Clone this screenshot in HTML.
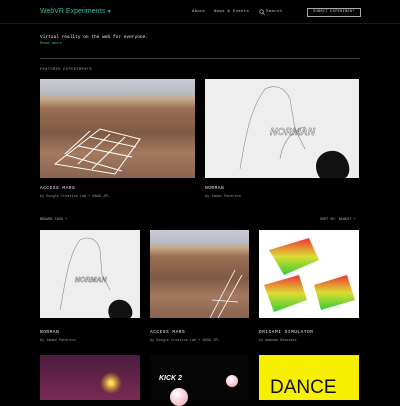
<!DOCTYPE html>
<html><head><meta charset="utf-8"><style>
*{margin:0;padding:0;box-sizing:border-box}
body{width:400px;height:400px;overflow:hidden;background:#000;color:#ddd;font-family:"Liberation Mono",monospace;position:relative}
.a{position:absolute}
.m{font-size:4px;letter-spacing:.3px;color:#ccc}
.t{font-size:4.5px;letter-spacing:.5px;color:#eee}
.s{font-size:3.5px;color:#999}
.mars{background:linear-gradient(180deg,#c9cbd3 0%,#b9bcc6 14%,#c9a98a 20%,#9a6f52 30%,#7e5a44 55%,#a47a5e 75%,#8a6450 100%)}
.norman{background:#eee}
</style></head><body>
<div class="a" style="left:0;top:0;width:400px;height:24px;border-bottom:1px solid #1a1a1a"></div>
<div class="a" style="left:40px;top:8px;font-family:'Liberation Sans',sans-serif;font-size:7px;color:#3bb7a0">WebVR Experiments <span style="font-size:5px">▼</span></div>
<div class="a m" style="left:192px;top:10px;">About</div>
<div class="a m" style="left:214px;top:10px;">News &amp; Events</div>
<svg class="a" style="left:259px;top:9px" width="6" height="6" viewBox="0 0 6 6"><circle cx="2.5" cy="2.5" r="1.8" fill="none" stroke="#ccc" stroke-width=".7"/><path d="M3.8 3.8L5.6 5.6" stroke="#ccc" stroke-width=".7"/></svg>
<div class="a m" style="left:266px;top:10px;">Search</div>
<div class="a m" style="left:307px;top:8px;width:54px;height:9px;border:1px solid #aaa;line-height:7px;text-align:center;font-size:3.6px">SUBMIT EXPERIMENT</div>
<div class="a" style="left:40px;top:35px;font-size:4.5px;color:#eee">Virtual reality on the web for everyone.</div>
<div class="a" style="left:40px;top:42px;font-size:4px;color:#3bb7a0">Read more</div>
<div class="a" style="left:40px;top:58px;width:320px;height:1px;background:#444"></div>
<div class="a s" style="left:40px;top:68px;letter-spacing:.5px;color:#aaa">FEATURED EXPERIMENTS</div>

<div class="a mars" style="left:40px;top:79px;width:155px;height:99px"></div>
<svg class="a" style="left:40px;top:79px" width="155" height="99"><path d="M15 85L60 50L100 60L75 95ZM26 76L82 92M38 67L92 78M50 58L96 68M25 75L50 52M38 85L70 55M52 90L85 58" stroke="#fff" stroke-width="1" fill="none"/></svg>
<div class="a norman" style="left:205px;top:79px;width:154px;height:99px"></div>
<svg class="a" style="left:205px;top:79px" width="154" height="99"><path d="M35 90C40 60 45 30 60 10C70 5 80 8 85 20L90 50L100 70" stroke="#888" stroke-width=".6" fill="none"/><path d="M75 80C78 60 90 50 100 48" stroke="#888" stroke-width=".6" fill="none"/><text x="65" y="56" font-size="10" font-family="Liberation Sans" font-style="italic" font-weight="bold" fill="none" stroke="#666" stroke-width=".4">NORMAN</text><path d="M115 99C105 85 115 70 130 72C145 75 148 95 140 99Z" fill="#111"/></svg>
<div class="a t" style="left:40px;top:186px">ACCESS MARS</div>
<div class="a s" style="left:40px;top:195px">by Google Creative Lab + NASA JPL</div>
<div class="a t" style="left:205px;top:186px">NORMAN</div>
<div class="a s" style="left:205px;top:195px">by James Paterson</div>

<div class="a s" style="left:40px;top:218px;color:#aaa">BROWSE TAGS +</div>
<div class="a s" style="left:320px;top:218px;color:#aaa">SORT BY: NEWEST +</div>

<div class="a norman" style="left:40px;top:230px;width:100px;height:88px"></div>
<svg class="a" style="left:40px;top:230px" width="100" height="88"><path d="M20 80C25 55 28 25 40 10C50 5 58 10 60 20L62 45L70 60" stroke="#888" stroke-width=".6" fill="none"/><text x="35" y="52" font-size="7" font-family="Liberation Sans" font-style="italic" font-weight="bold" fill="none" stroke="#666" stroke-width=".4">NORMAN</text><path d="M70 88C65 78 72 68 82 70C92 72 95 85 90 88Z" fill="#111"/></svg>
<div class="a mars" style="left:150px;top:230px;width:99px;height:88px"></div>
<svg class="a" style="left:150px;top:230px" width="99" height="88"><path d="M60 88L85 40M68 88L92 45M62 70L88 72" stroke="#fff" stroke-width=".8" fill="none"/></svg>
<div class="a" style="left:259px;top:230px;width:100px;height:88px;background:#fff"></div>
<svg class="a" style="left:259px;top:230px" width="100" height="88"><defs><linearGradient id="g" x1="0" y1="0" x2="0" y2="1"><stop offset="0" stop-color="#e33"/><stop offset=".5" stop-color="#dd3"/><stop offset="1" stop-color="#3c3"/></linearGradient></defs><path d="M10 20L50 8L60 30L25 45Z" fill="url(#g)"/><path d="M5 55L40 45L48 70L15 82Z" fill="url(#g)"/><path d="M55 55L88 45L96 70L62 80Z" fill="url(#g)"/></svg>
<div class="a t" style="left:40px;top:330px">NORMAN</div>
<div class="a s" style="left:40px;top:339px">by James Paterson</div>
<div class="a t" style="left:150px;top:330px">ACCESS MARS</div>
<div class="a s" style="left:150px;top:339px">by Google Creative Lab + NASA JPL</div>
<div class="a t" style="left:259px;top:330px">ORIGAMI SIMULATOR</div>
<div class="a s" style="left:259px;top:339px">by Amanda Ghassaei</div>

<div class="a" style="left:40px;top:355px;width:100px;height:45px;background:linear-gradient(180deg,#4a1d3d,#7a2a55)"></div>
<div class="a" style="left:100px;top:372px;width:22px;height:22px;border-radius:50%;background:radial-gradient(circle,#ffe060 10%,rgba(220,180,40,.6) 40%,transparent 70%)"></div>
<div class="a" style="left:150px;top:355px;width:99px;height:45px;background:#050505"></div>
<div class="a" style="left:159px;top:375px;font-family:'Liberation Sans';font-weight:bold;font-style:italic;font-size:7px;color:#fff">KICK 2</div>
<div class="a" style="left:170px;top:388px;width:18px;height:18px;border-radius:50%;background:radial-gradient(circle at 40% 35%,#fff,#f19bb0)"></div>
<div class="a" style="left:226px;top:375px;width:12px;height:12px;border-radius:50%;background:radial-gradient(circle at 40% 35%,#fff,#f19bb0)"></div>
<div class="a" style="left:259px;top:355px;width:100px;height:45px;background:#f6f000"></div>
<div class="a" style="left:270px;top:377px;font-family:'Liberation Sans',sans-serif;font-size:19px;color:#111">DANCE</div>
</body></html>
